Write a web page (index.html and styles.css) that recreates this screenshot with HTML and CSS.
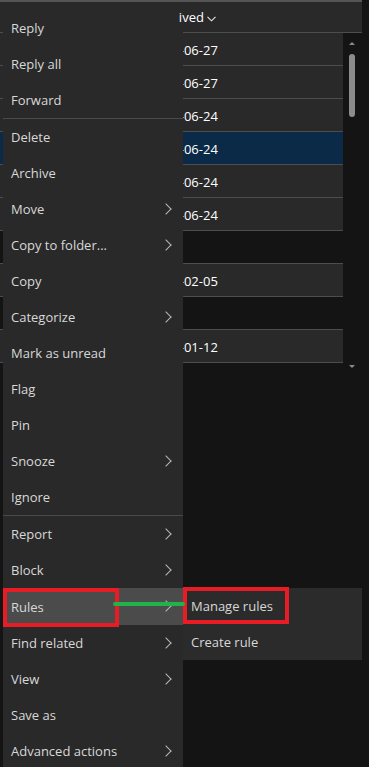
FILE: index.html
```html
<!DOCTYPE html>
<html lang="en">
<head>
    <meta charset="UTF-8">
    <meta name="viewport" content="width=device-width, initial-scale=1.0">
    <title>Mail context menu</title>
    <link rel="stylesheet" href="styles.css">
</head>
<body>
    <div class="mail-list">
        <div class="list-body">
            <div class="rows">
                <div class="list-header">
                    <span class="col-tick"></span>
                    <span class="header-label">Received</span>
                    <svg class="sort-icon" width="9" height="6" viewBox="0 0 9 6"><polyline points="0.5,0.8 4.5,4.8 8.5,0.8" fill="none" stroke="#e8e8e8" stroke-width="1.1"/></svg>
                </div>
                <div class="mail-row"><span class="date">2024-06-27</span></div>
                <div class="mail-row"><span class="date">2024-06-27</span></div>
                <div class="mail-row"><span class="date">2024-06-24</span></div>
                <div class="mail-row selected"><span class="date">2024-06-24</span></div>
                <div class="mail-row"><span class="date">2024-06-24</span></div>
                <div class="mail-row"><span class="date">2024-06-24</span></div>
                <div class="group-gap"></div>
                <div class="mail-row"><span class="date">2024-02-05</span></div>
                <div class="group-gap"></div>
                <div class="mail-row"><span class="date">2024-01-12</span></div>
            </div>
            <div class="scrollbar">
                <span class="arrow-up"></span>
                <span class="thumb"></span>
                <span class="spacer"></span>
                <span class="arrow-down"></span>
            </div>
        </div>
    </div>

    <!-- context menu -->
    <div class="context-menu">
        <div class="menu-item">Reply</div>
        <div class="menu-item">Reply all</div>
        <div class="menu-item">Forward</div>
        <div class="menu-divider"></div>
        <div class="menu-item">Delete</div>
        <div class="menu-item">Archive</div>
        <div class="menu-item has-sub">Move</div>
        <div class="menu-item has-sub">Copy to folder...</div>
        <div class="menu-item">Copy</div>
        <div class="menu-item has-sub">Categorize</div>
        <div class="menu-item">Mark as unread</div>
        <div class="menu-item">Flag</div>
        <div class="menu-item">Pin</div>
        <div class="menu-item has-sub">Snooze</div>
        <div class="menu-item">Ignore</div>
        <div class="menu-divider"></div>
        <div class="menu-item has-sub">Report</div>
        <div class="menu-item has-sub">Block</div>
        <div class="menu-item has-sub active">Rules</div>
        <div class="menu-item has-sub">Find related</div>
        <div class="menu-item has-sub">View</div>
        <div class="menu-item">Save as</div>
        <div class="menu-item has-sub">Advanced actions</div>
    </div>

    <div class="sub-menu">
        <div class="menu-item sub-item">Manage rules</div>
        <div class="menu-item sub-item">Create rule</div>
    </div>

    <!-- annotations -->
    <div class="mark mark-rules"></div>
    <div class="mark mark-manage"></div>
    <div class="arrow-line"></div>
</body>
</html>
```

FILE: styles.css
```css
html, body {
    margin: 0;
    padding: 0;
}

body {
    width: 369px;
    height: 767px;
    overflow: hidden;
    position: relative;
    background-color: #141414;
    font-family: "Open Sans", "Noto Sans", sans-serif;
    font-size: 13px;
}

.mail-list {
    width: 362px;
    border-top: 2px solid #555;
}

.list-body {
    display: flex;
}

.rows {
    width: 343px;
}

.list-header {
    width: 362px;
    height: 31px;
    box-sizing: border-box;
    background-color: #292929;
    border-bottom: 1px solid #4d4d4d;
    display: flex;
    align-items: center;
}

.col-tick {
    width: 1px;
    height: 3px;
    background: #666;
    margin-left: 139px;
    align-self: flex-start;
    margin-top: 5px;
}

/* only the tail of the label peeks out past the menu */
.header-label {
    color: #fff;
    margin-left: 10px;
    position: relative;
    z-index: 2;
    clip-path: inset(0 0 0 29px);
}

.sort-icon {
    margin-left: 3px;
    margin-top: 3px;
}

.mail-row {
    height: 33px;
    box-sizing: border-box;
    background-color: #292929;
    border-bottom: 1px solid #4d4d4d;
    display: flex;
    align-items: center;
    padding-top: 2px;
}

.mail-row.selected {
    background-color: #0b2a47;
}

.group-gap {
    height: 32px;
    border-bottom: 1px solid #4d4d4d;
}

.date {
    color: #fff;
    margin-left: 150px;
}

.scrollbar {
    width: 18px;
    margin-top: 32px;
    height: 334px;
    display: flex;
    flex-direction: column;
    align-items: center;
    background-color: #141414;
}

.arrow-up,
.arrow-down {
    width: 0;
    height: 0;
    border-left: 3px solid transparent;
    border-right: 3px solid transparent;
}

.arrow-up {
    border-bottom: 3px solid #8a8a8a;
    margin-top: 8px;
}

.arrow-down {
    border-top: 3px solid #8a8a8a;
}

.thumb {
    width: 6px;
    height: 63px;
    margin-top: 9px;
    border-radius: 3px;
    background-color: #8c8c8c;
}

.spacer {
    flex: 1;
}

/* menus */

.context-menu {
    position: absolute;
    left: 3px;
    top: 3px;
    width: 180px;
    padding-top: 7px;
    background-color: #292929;
}

.menu-item {
    height: 36px;
    padding-left: 8px;
    display: flex;
    align-items: center;
    color: #d8d8d8;
    position: relative;
}

.menu-item.has-sub::after {
    content: "";
    position: absolute;
    right: 13px;
    top: 14px;
    width: 7px;
    height: 7px;
    border-top: 1px solid #b8b8b8;
    border-right: 1px solid #b8b8b8;
    transform: rotate(45deg);
}

.menu-item.active {
    height: 37px;
    background-color: #4b4b4b;
}

.menu-divider {
    height: 1px;
    background-color: #4a4a4a;
}

.sub-menu {
    position: absolute;
    left: 183px;
    top: 588px;
    width: 179px;
    background-color: #2b2b2b;
}

.sub-item {
    padding-left: 8px;
}

.mark {
    position: absolute;
    box-sizing: border-box;
    border: 4px solid #e81c24;
}

.mark-rules {
    left: 3px;
    top: 588px;
    width: 116px;
    height: 39px;
}

.mark-manage {
    left: 183px;
    top: 587px;
    width: 106px;
    height: 37px;
}

.arrow-line {
    position: absolute;
    left: 113px;
    top: 602px;
    width: 72px;
    height: 4px;
    border-radius: 2px;
    background-color: #22b24c;
}
```
